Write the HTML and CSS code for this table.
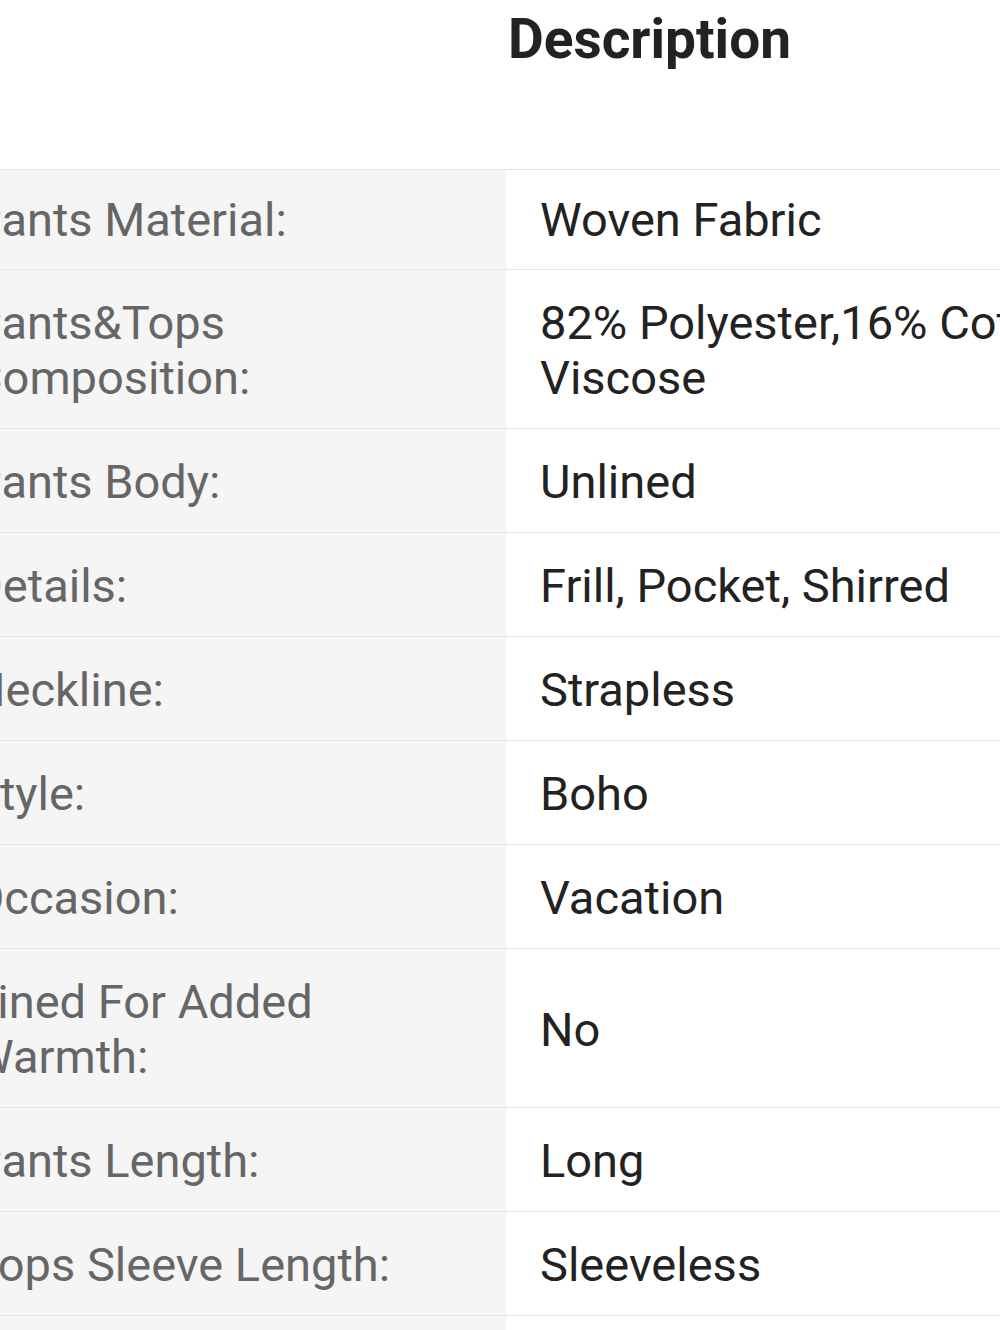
FILE: index.html
```html
<!DOCTYPE html>
<html lang="en">
<head>
<meta charset="utf-8">
<title>Description</title>
<link rel="stylesheet" href="styles.css">
</head>
<body>
<section class="desc">
  <h2 class="desc-title">Description</h2>
  <div class="spec">
    <div class="row first"><div class="label">Pants Material:</div><div class="value">Woven Fabric</div></div>
    <div class="row"><div class="label">Pants&amp;Tops Composition:</div><div class="value">82% Polyester,16% Cotton,2% Viscose</div></div>
    <div class="row"><div class="label">Pants Body:</div><div class="value">Unlined</div></div>
    <div class="row"><div class="label">Details:</div><div class="value">Frill, Pocket, Shirred</div></div>
    <div class="row"><div class="label">Neckline:</div><div class="value">Strapless</div></div>
    <div class="row"><div class="label">Style:</div><div class="value">Boho</div></div>
    <div class="row"><div class="label">Occasion:</div><div class="value">Vacation</div></div>
    <div class="row"><div class="label">Lined For Added Warmth:</div><div class="value">No</div></div>
    <div class="row"><div class="label">Pants Length:</div><div class="value">Long</div></div>
    <div class="row"><div class="label">Tops Sleeve Length:</div><div class="value">Sleeveless</div></div>
    <div class="row"><div class="label">Tops Type:</div><div class="value">Tube</div></div>
  </div>
</section>
</body>
</html>
```
FILE: styles.css
```css
html, body {
  margin: 0;
  padding: 0;
  background: #ffffff;
  overflow: hidden;
}
body {
  font-family: Roboto, "Liberation Sans", sans-serif;
}
.desc {
  width: 1400px;
  margin-left: -62px;
}
.desc-title {
  margin: 0;
  padding: 5px 0 0 570px;
  height: 169px;
  box-sizing: border-box;
  font-size: 55px;
  line-height: 68px;
  font-weight: 700;
  color: #222222;
}
.spec {
  border-top: 1px solid #e6e6e6;
}
.row {
  display: grid;
  grid-template-columns: 568px 800px;
  border-bottom: 1px solid #e6e6e6;
}
.label, .value {
  font-size: 47px;
  line-height: 55px;
  padding: 25px 34px 23px;
}
.first .label, .first .value {
  padding-top: 22px;
  padding-bottom: 22px;
}
.label {
  background: #f5f5f5;
  color: #666666;
}
.value {
  color: #222222;
  padding-right: 60px;
  display: flex;
  align-items: center;
}
```
